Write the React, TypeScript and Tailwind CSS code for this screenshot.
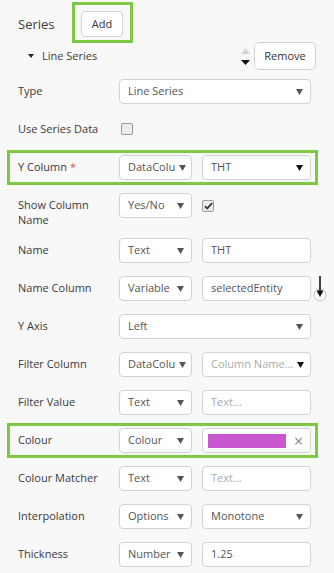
import React from "react";

type SelectProps = {
  value: string;
  className: string;
  placeholder?: boolean;
  dark?: boolean;
};

function Caret({ dark }: { dark?: boolean }) {
  return (
    <svg width="7" height="6" viewBox="0 0 7 6" className="shrink-0">
      <path d="M0 0h7L3.5 6z" fill={dark ? "#111" : "#555"} />
    </svg>
  );
}

function Select({ value, className, placeholder, dark }: SelectProps) {
  return (
    <div
      className={`${className} flex h-[25px] shrink-0 items-center justify-between gap-[4px] rounded-[4px] border border-[#d2d2d2] bg-white pl-[8px] pr-[7px]`}
    >
      <span className={`whitespace-nowrap ${placeholder ? "text-[#aaa]" : "text-[#555]"}`}>{value}</span>
      <Caret dark={dark} />
    </div>
  );
}

function Input({ value, placeholder }: { value: string; placeholder?: boolean }) {
  return (
    <div className="flex h-[25px] w-[109px] shrink-0 items-center rounded-[4px] border border-[#d2d2d2] bg-white pl-[8px]">
      <span className={placeholder ? "text-[#aaa]" : "text-[#555]"}>{value}</span>
    </div>
  );
}

function Checkbox({ checked }: { checked?: boolean }) {
  return (
    <div className="flex h-[12px] w-[12px] shrink-0 items-center justify-center rounded-[2px] border border-[#9a9a9a] bg-[#ececec]">
      {checked && (
        <svg width="9" height="8" viewBox="0 0 9 8">
          <path d="M1 4.2l2.2 2.3L8 1.2" stroke="#333" strokeWidth="1.8" fill="none" />
        </svg>
      )}
    </div>
  );
}

function Row({
  label,
  children,
  required,
  highlight,
}: {
  label: string;
  children: React.ReactNode;
  required?: boolean;
  highlight?: boolean;
}) {
  return (
    <div
      className={`ml-[12px] flex h-[25px] w-[301px] items-center pl-[6px] ${
        highlight ? "outline-[3px] outline-offset-2 outline-[#7ec843] outline-solid" : ""
      }`}
    >
      <div className="w-[101px] shrink-0 text-[#3a3a3a]">
        {label}
        {required && <span className="ml-[3px] text-[#e5534b]">*</span>}
      </div>
      <div className="flex items-center gap-[10px]">{children}</div>
    </div>
  );
}

export default function App() {
  return (
    <div className="h-[573px] w-[334px] overflow-hidden bg-[#f8f8f8] font-['Open_Sans',sans-serif] text-[11px] text-[#3a3a3a]">
      <div className="flex h-[42px] items-start pt-[2px] pl-[18px]">
        <div className="mt-[13px] w-[54px] shrink-0 text-[13px] text-[#3a3a3a]">Series</div>
        <div className="border-[3px] border-[#7ec843] pt-[6px] pr-[7px] pb-[3px] pl-[6px]">
          <button className="flex h-[26px] w-[42px] items-center justify-center rounded-[4px] border border-[#d2d2d2] bg-white text-[11px] text-[#333]">
            Add
          </button>
        </div>
      </div>

      <div className="flex h-[28px] items-center pr-[18px] pl-[28px]">
        <svg width="6" height="4" viewBox="0 0 6 4" className="mr-[8px]">
          <path d="M0 0h6L3 4z" fill="#222" />
        </svg>
        <span className="text-[#3a3a3a]">Line Series</span>
        <div className="ml-auto mr-[4px] flex flex-col items-center gap-[6px]">
          <svg width="9" height="6" viewBox="0 0 9 6">
            <path d="M0 6L4.5 0L9 6z" fill="#d5d5d5" />
          </svg>
          <svg width="9" height="5" viewBox="0 0 9 5">
            <path d="M0 0h9L4.5 5z" fill="#111" />
          </svg>
        </div>
        <button className="flex h-[28px] w-[62px] items-center justify-center rounded-[5px] border border-[#d2d2d2] bg-white text-[11px] text-[#333]">
          Remove
        </button>
      </div>

      <div className="mt-[9px] flex flex-col gap-[13px]">
        <Row label="Type">
          <Select value="Line Series" className="w-[192px]" />
        </Row>
        <Row label="Use Series Data">
          <div className="ml-[2px] mt-[-2px]">
            <Checkbox />
          </div>
        </Row>
        <Row label="Y Column" required highlight>
          <Select value="DataColu" className="w-[73px]" />
          <Select value="THT" className="w-[109px]" dark />
        </Row>
        <div className="ml-[12px] flex h-[32px] w-[301px] items-start pl-[6px]">
          <div className="w-[101px] shrink-0 pt-[4px] leading-[15px] text-[#3a3a3a]">
            Show Column
            <br />
            Name
          </div>
          <div className="flex h-[25px] items-center gap-[10px]">
            <Select value="Yes/No" className="w-[73px]" />
            <Checkbox checked />
          </div>
        </div>
        <Row label="Name">
          <Select value="Text" className="w-[73px]" />
          <Input value="THT" />
        </Row>
        <Row label="Name Column">
          <Select value="Variable" className="w-[73px]" />
          <div className="flex items-center gap-[2px]">
            <Input value="selectedEntity" />
            <svg width="14" height="28" viewBox="0 0 14 28" className="shrink-0 overflow-visible">
              <circle cx="7" cy="20" r="6" fill="none" stroke="#c8c8c8" strokeWidth="1" />
              <path d="M7 1v18" stroke="#111" strokeWidth="1.6" />
              <path d="M3.5 15.5L7 22l3.5-6.5z" fill="#111" />
            </svg>
          </div>
        </Row>
        <Row label="Y Axis">
          <Select value="Left" className="w-[192px]" />
        </Row>
        <Row label="Filter Column">
          <Select value="DataColu" className="w-[73px]" />
          <Select value="Column Name..." className="w-[109px]" placeholder dark />
        </Row>
        <Row label="Filter Value">
          <Select value="Text" className="w-[73px]" />
          <Input value="Text..." placeholder />
        </Row>
        <Row label="Colour" highlight>
          <Select value="Colour" className="w-[73px]" />
          <div className="flex h-[25px] w-[109px] shrink-0 items-center rounded-[4px] border border-[#d2d2d2] bg-white pl-[5px]">
            <div className="h-[14px] w-[78px] bg-[#c957d0]" />
            <span className="ml-[8px] text-[16px] leading-none text-[#888]">×</span>
          </div>
        </Row>
        <Row label="Colour Matcher">
          <Select value="Text" className="w-[73px]" />
          <Input value="Text..." placeholder />
        </Row>
        <Row label="Interpolation">
          <Select value="Options" className="w-[73px]" />
          <Select value="Monotone" className="w-[109px]" />
        </Row>
        <Row label="Thickness">
          <Select value="Number" className="w-[73px]" />
          <Input value="1.25" />
        </Row>
      </div>
    </div>
  );
}
